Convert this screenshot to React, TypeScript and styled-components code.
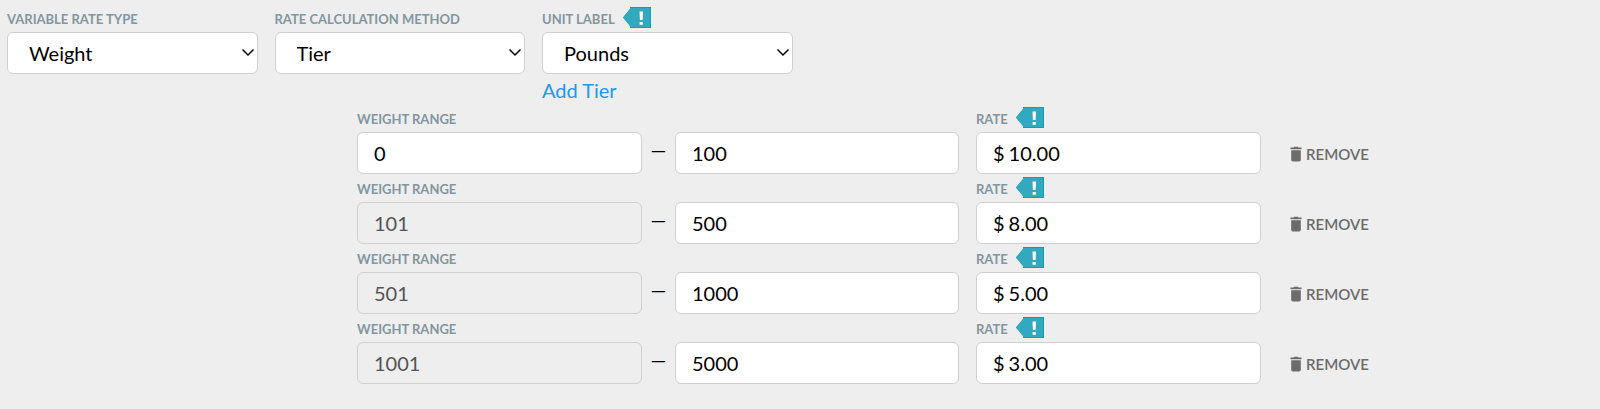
import React, { useId } from "react";
import styled, { createGlobalStyle } from "styled-components";

const GlobalStyle = createGlobalStyle`
  *, *::before, *::after { box-sizing: border-box; }
  body {
    margin: 0;
    background: #eeeeee;
    color: #000000;
    font-family: Lato, "Open Sans", sans-serif;
    font-size: 20px;
  }
`;

const Form = styled.form`
  padding: 7px 5px 24px 7px;
`;

const Settings = styled.div`
  display: grid;
  grid-template-columns: repeat(6, minmax(0, 1fr));
  column-gap: 17px;
  align-items: start;
  margin-bottom: 3px;
`;

const TierRow = styled.div`
  display: grid;
  grid-template-columns: 350fr 285fr 33px 284fr 17px 285fr 334fr;
  align-items: end;
  margin-bottom: 3px;
`;

const FieldBox = styled.div<{ $column?: number }>`
  grid-column: ${({ $column }) => $column ?? "auto"};
  min-width: 0;
`;

const Caption = styled.div`
  display: flex;
  gap: 8px;
  height: 25px;
`;

const Label = styled.label`
  color: #82969f;
  font-size: 13px;
  font-weight: 700;
  line-height: 25px;
  text-transform: uppercase;
  white-space: nowrap;
`;

const HintButton = styled.button`
  display: block;
  width: 28px;
  height: 21px;
  margin: 0;
  padding: 0;
  border: 0;
  background: none;
  cursor: pointer;
`;

const Control = styled.input`
  display: block;
  width: 100%;
  height: 42px;
  padding: 0 16px;
  border: 1px solid #d0d0d0;
  border-radius: 6px;
  background: #ffffff;
  color: #000000;
  font: inherit;

  &:disabled {
    background: #eeeeee;
    color: #545454;
  }
`;

const SelectBox = styled.div`
  position: relative;
`;

const Select = styled(Control).attrs({ as: "select" })`
  appearance: none;
  padding: 0 32px 0 21px;
`;

const Chevron = styled.svg`
  position: absolute;
  top: 50%;
  right: 3px;
  margin-top: -5px;
  pointer-events: none;
`;

const AddLink = styled.a`
  display: block;
  width: fit-content;
  padding-top: 3px;
  color: #2196f3;
  line-height: 27px;
  text-decoration: none;
`;

const Dash = styled.span`
  height: 42px;
  line-height: 34px;
  text-align: center;
`;

const MoneyBox = styled.div`
  display: flex;
  align-items: center;
  height: 42px;
  padding-left: 16px;
  border: 1px solid #d0d0d0;
  border-radius: 6px;
  background: #ffffff;
`;

const MoneyInput = styled.input`
  flex: 1;
  min-width: 0;
  height: 40px;
  padding: 0 16px 0 4px;
  border: 0;
  outline: 0;
  background: transparent;
  color: inherit;
  font: inherit;
`;

const RemoveButton = styled.button`
  display: flex;
  align-items: center;
  gap: 4px;
  justify-self: start;
  height: 42px;
  margin-left: 29px;
  padding: 2px 0 0;
  border: 0;
  background: none;
  color: #6b6b6b;
  font: 600 15px Lato, "Open Sans", sans-serif;
  text-transform: uppercase;
  cursor: pointer;
`;

function Hint({ label }: { label: string }) {
  return (
    <HintButton type="button" aria-label={label}>
      <svg width="28" height="21" viewBox="0 0 28 21" aria-hidden="true">
        <path d="M0 10.5 7 2V0h21v21H7v-2z" fill="#179bb0" />
        <path d="M0 10.5 7 2V1h20v19H7v-1z" fill="#31aabf" />
        <path d="M16.5 4.5h3.5l-.4 8.6h-2.7zM16.6 15h3.2v2.8h-3.2z" fill="#ffffff" />
      </svg>
    </HintButton>
  );
}

function SelectField({ label, options, hint, children }: {
  label: string;
  options: string[];
  hint?: boolean;
  children?: React.ReactNode;
}) {
  const id = useId();
  return (
    <FieldBox>
      <Caption>
        <Label htmlFor={id}>{label}</Label>
        {hint && <Hint label={`About ${label}`} />}
      </Caption>
      <SelectBox>
        <Select id={id} defaultValue={options[0]}>
          {options.map((option) => <option key={option}>{option}</option>)}
        </Select>
        <Chevron width="14" height="10" viewBox="0 0 14 10" aria-hidden="true">
          <path d="M1.5 1.5 7 7 12.5 1.5" fill="none" stroke="#000000" strokeWidth="1.5" />
        </Chevron>
      </SelectBox>
      {children}
    </FieldBox>
  );
}

function Tier({ from, to, rate, locked }: { from: string; to: string; rate: string; locked: boolean }) {
  const id = useId();
  return (
    <TierRow>
      <FieldBox $column={2}>
        <Caption>
          <Label htmlFor={`${id}-from`}>Weight range</Label>
        </Caption>
        <Control id={`${id}-from`} defaultValue={from} disabled={locked} />
      </FieldBox>
      <Dash>—</Dash>
      <Control aria-label="Weight range end" defaultValue={to} />
      <FieldBox $column={6}>
        <Caption>
          <Label htmlFor={`${id}-rate`}>Rate</Label>
          <Hint label="About rate" />
        </Caption>
        <MoneyBox>
          <span>$</span>
          <MoneyInput id={`${id}-rate`} defaultValue={rate} />
        </MoneyBox>
      </FieldBox>
      <RemoveButton type="button">
        <svg width="12" height="16" viewBox="0 0 12 16" fill="currentColor" aria-hidden="true">
          <path d="M.5 1.5h3L4.2.8h3.6l.7.7h3v1.7H.5zM1.2 4.2h9.6v9.6q0 1.6-1.6 1.6H2.8q-1.6 0-1.6-1.6z" />
        </svg>
        Remove
      </RemoveButton>
    </TierRow>
  );
}

const tiers = [
  { from: "0", to: "100", rate: "10.00" },
  { from: "101", to: "500", rate: "8.00" },
  { from: "501", to: "1000", rate: "5.00" },
  { from: "1001", to: "5000", rate: "3.00" },
];

export default function App() {
  return (
    <>
      <GlobalStyle />
      <Form>
        <Settings>
          <SelectField label="Variable rate type" options={["Weight"]} />
          <SelectField label="Rate calculation method" options={["Tier"]} />
          <SelectField label="Unit label" options={["Pounds"]} hint>
            <AddLink href="#add-tier">Add Tier</AddLink>
          </SelectField>
        </Settings>
        {tiers.map((tier, index) => (
          <Tier key={tier.from} {...tier} locked={index > 0} />
        ))}
      </Form>
    </>
  );
}
